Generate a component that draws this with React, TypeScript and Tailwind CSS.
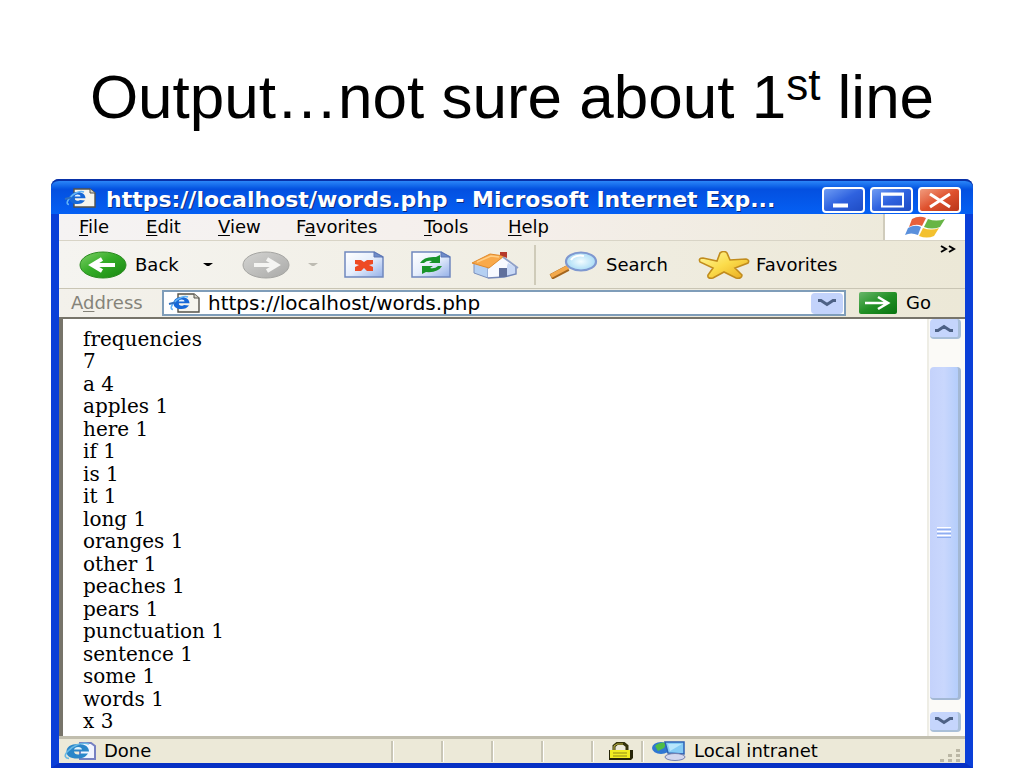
import type { ReactNode } from "react";

const words = [
  "frequencies", "7", "a 4", "apples 1", "here 1", "if 1", "is 1", "it 1", "long 1",
  "oranges 1", "other 1", "peaches 1", "pears 1", "punctuation 1", "sentence 1",
  "some 1", "words 1", "x 3",
];

function PageIcon({ className }: { className: string }) {
  return (
    <svg viewBox="0 0 32 20" preserveAspectRatio="none" className={className} aria-hidden="true">
      <path d="M10 1h16l5 4v14H10z" fill="#f6f5ee" stroke="#55534a" strokeWidth="1.4" />
      <path d="M26 1v4h5" fill="#d6d4c8" stroke="#55534a" />
      <path d="M21 12.500c-2 2.500-4 3.500-7.500 3.500-5 0-8-2-8-5.800S9 4 13.500 4s8 2.400 8 6.300H10.500c.2 1.700 1.300 2.400 3 2.400 1.300 0 2-.2 2.500-.7z" fill="#1668d8" />
      <path d="M10.700 8.500h5.800c-.2-1.200-1.200-1.900-2.800-1.900s-2.700.7-3 1.900z" fill="#e8f3ff" />
      <path d="M20 4c-4-1.500-10 1-14 5.500C3 13 2 16 5 16.500" fill="none" stroke="#63b4f6" strokeWidth="1.600" />
      <path d="M1 11l6-1.500" stroke="#2f6fc0" strokeWidth="2" />
    </svg>
  );
}

function StatusIcon() {
  return (
    <svg viewBox="0 0 32 18" preserveAspectRatio="none" className="h-[18px] w-8 shrink-0" aria-hidden="true">
      <path d="M16 1h11l4 3v13H16z" fill="#f2f5ff" stroke="#7681c2" strokeWidth="2" />
      <path d="M24 11.500c-2 3-5 5-10.500 5C6 16.500 2.500 14 2.500 9.500S6.500 2 14 2s11 3 11 7.500H10c.3 2 1.500 3 4 3 1.500 0 2.500-.3 3-1z" fill="#2a86c9" />
      <path d="M10 7.500h8c-.2-1.500-1.500-2.500-3.800-2.500-2.400 0-3.800 1-4.200 2.500z" fill="#dff2fc" />
      <path d="M25 2C18-.5 8 4 3 10c-3 4-2 6 2 6.500" fill="none" stroke="#67b8e4" strokeWidth="1.600" />
    </svg>
  );
}

function RoundArrow({ forward = false }: { forward?: boolean }) {
  return (
    <svg viewBox="0 0 48 28" className="h-7 w-12 shrink-0" aria-hidden="true">
      <defs>
        <linearGradient id="greenDisc" x1="0" y1="0" x2="1" y2="1">
          <stop offset="0" stopColor="#7fd069" />
          <stop offset=".45" stopColor="#35ad28" />
          <stop offset="1" stopColor="#18860f" />
        </linearGradient>
        <linearGradient id="greyDisc" x1="0" y1="0" x2="1" y2="1">
          <stop offset="0" stopColor="#d4d4d2" />
          <stop offset="1" stopColor="#a9a9a7" />
        </linearGradient>
      </defs>
      <ellipse cx="24" cy="14" rx="23" ry="13" fill={forward ? "url(#greyDisc)" : "url(#greenDisc)"} stroke={forward ? "#a5a5a2" : "#2b8b20"} />
      <path
        d={forward ? "M12 14h22M25 8l10 6-10 6" : "M36 14H14M23 8l-10 6 10 6"}
        fill="none"
        stroke={forward ? "#f4f4f2" : "#fff"}
        strokeWidth="4"
      />
    </svg>
  );
}

function Sheet({ children }: { children: ReactNode }) {
  return (
    <svg viewBox="0 0 40 27" className="h-[27px] w-10" aria-hidden="true">
      <defs>
        <linearGradient id="sheet" x1="0" y1="0" x2="1" y2="1">
          <stop offset="0" stopColor="#fff" />
          <stop offset=".5" stopColor="#e6eefc" />
          <stop offset="1" stopColor="#94b0e8" />
        </linearGradient>
      </defs>
      <path d="M1 1h29l9 5v20H1z" fill="url(#sheet)" stroke="#7088bf" strokeWidth="1.500" />
      <path d="M30 1v5h9z" fill="#6f8cca" stroke="#5d76b4" />
      {children}
    </svg>
  );
}

function Caret({ className }: { className: string }) {
  return (
    <svg viewBox="0 0 10 4" className={className} aria-hidden="true">
      <path d="M0 0h10L6 3H4z" fill="currentColor" />
    </svg>
  );
}

function Chevron({ up = false }: { up?: boolean }) {
  return (
    <svg viewBox="0 0 20 8" className="h-2 w-5" aria-hidden="true">
      <path d={up ? "M1 6.500h3l6-4 6 4h3" : "M1 1.500h3l6 4 6-4h3"} fill="none" stroke="#4d6185" strokeWidth="3" />
    </svg>
  );
}

function House() {
  return (
    <svg viewBox="0 0 48 28" className="h-7 w-12" aria-hidden="true">
      <path d="M3 12l14 4v11L3 22z" fill="#b5d0f2" stroke="#7c90bd" />
      <path d="M17 18L32 7l13 9v7l-12 3-16 1z" fill="#f8faff" />
      <path d="M37 12l8 4v7l-9 3V15z" fill="#c9d9f6" />
      <path d="M17 27l16-1 12-3v-7" fill="none" stroke="#7286b8" strokeWidth="1.400" />
      <path d="M28 17h8v9h-8z" fill="#60709c" />
      <path d="M1 12L19 3l14 2-15 12-7-2z" fill="#f9a94a" stroke="#e08a2c" />
      <path d="M6 11l14-6 8 1" fill="none" stroke="#ffcf86" strokeWidth="1.500" />
      <path d="M32 6l15 11" stroke="#8fa0c8" strokeWidth="1.800" />
      <path d="M29 1h7v6l-7-3z" fill="#b53a2c" />
    </svg>
  );
}

function Magnifier() {
  return (
    <svg viewBox="0 0 50 28" className="h-7 w-[50px] shrink-0" aria-hidden="true">
      <defs>
        <radialGradient id="lens">
          <stop offset="0" stopColor="#f3fcff" />
          <stop offset="1" stopColor="#a9dcf6" />
        </radialGradient>
      </defs>
      <path d="M20 17L3 26" stroke="#a5651c" strokeWidth="6" />
      <path d="M20 16L3 25" stroke="#f3a94c" strokeWidth="4" />
      <ellipse cx="33" cy="10.500" rx="15" ry="9" fill="url(#lens)" stroke="#7f98d0" strokeWidth="2.200" />
      <path d="M23 9c2-4 8-5 13-4" fill="none" stroke="#fff" strokeWidth="2" />
    </svg>
  );
}

function Star() {
  return (
    <svg viewBox="0 0 52 28" className="h-7 w-[52px] shrink-0" aria-hidden="true">
      <defs>
        <linearGradient id="star" x1="0" y1="0" x2="1" y2="1">
          <stop offset="0" stopColor="#fff7a0" />
          <stop offset=".5" stopColor="#fbdc4b" />
          <stop offset="1" stopColor="#e9a91d" />
        </linearGradient>
      </defs>
      <path d="M22 2q4-3 7 0l3 7 16-1q4 1 2 4l-13 5 7 7q0 4-6 3l-12-6-11 6q-6 1-5-3l5-7L2 11q-2-4 3-4l14 3z" fill="url(#star)" stroke="#c18c1e" strokeWidth="1.600" />
    </svg>
  );
}

function WindowsFlag() {
  return (
    <svg viewBox="0 0 42 22" className="h-[22px] w-[42px]" aria-hidden="true">
      <path d="M8 3q7-4 14-1l-4 8q-6-3-13 1z" fill="#e8603a" />
      <path d="M24 3q8 3 17 0l-5 8q-8 3-16 0z" fill="#67b545" />
      <path d="M4 12q7-4 13-1l-3 8q-7-3-13 0z" fill="#5a90dc" />
      <path d="M19 12q8 3 16 0l-5 8q-7 3-15 0z" fill="#f3c12f" />
    </svg>
  );
}

function Menu({ letter, before = "", after, width }: { letter: string; before?: string; after: string; width: string }) {
  return (
    <button type="button" className={`shrink-0 text-left ${width}`}>
      {before}
      <span className="underline underline-offset-2">{letter}</span>
      {after}
    </button>
  );
}

const captionButton =
  "flex h-[26px] w-[43px] items-center justify-center rounded-[4px] border-2 border-white";

function TitleBar() {
  return (
    <header className="flex h-[35px] items-center rounded-t-lg border-t-2 border-[#0831a8] bg-linear-to-b from-[#2b86f8] via-[#0450e0] via-25% to-[#0560f4] pr-3 pl-[13px]">
      <PageIcon className="h-5 w-8 shrink-0" />
      <h2 className="min-w-0 flex-1 truncate pt-1 pl-[10px] text-[22px] leading-7 font-bold text-white [text-shadow:1px_1px_0_#0a2a80]">
        https://localhost/words.php - Microsoft Internet Exp...
      </h2>
      <div className="flex gap-[5px] pt-1">
        <button type="button" aria-label="Minimize" className={`${captionButton} bg-linear-to-br from-[#6f9bf3] via-[#2f62df] to-[#1f4cc4]`}>
          <svg viewBox="0 0 36 20" className="h-5 w-9"><path d="M7 13.500h15v4H7z" fill="#fff" /></svg>
        </button>
        <button type="button" aria-label="Maximize" className={`${captionButton} bg-linear-to-br from-[#6f9bf3] via-[#2f62df] to-[#1f4cc4]`}>
          <svg viewBox="0 0 36 20" className="h-5 w-9"><path d="M8 4.500h21v12H8z" fill="none" stroke="#fff" strokeWidth="2" /><path d="M7 4h23" stroke="#fff" strokeWidth="3" /></svg>
        </button>
        <button type="button" aria-label="Close" className={`${captionButton} bg-linear-to-br from-[#f09a7c] via-[#df512d] to-[#b9361a]`}>
          <svg viewBox="0 0 36 20" className="h-5 w-9"><path d="M8 4l20 13M28 4L8 17" stroke="#fff" strokeWidth="3" /></svg>
        </button>
      </div>
    </header>
  );
}

function MenuBar() {
  return (
    <nav className="flex h-[27px] items-stretch border-b border-[#d8d4c6] bg-linear-to-r from-[#f5f3f3] via-[#f5efeb] to-[#ece9d8]">
      <div className="flex min-w-0 flex-1 items-center border-r-2 border-[#d0ccbc] pl-5">
        <Menu letter="F" after="ile" width="w-[67px]" />
        <Menu letter="E" after="dit" width="w-[72px]" />
        <Menu letter="V" after="iew" width="w-[78px]" />
        <Menu before="F" letter="a" after="vorites" width="w-[128px]" />
        <Menu letter="T" after="ools" width="w-[84px]" />
        <Menu letter="H" after="elp" width="w-[60px]" />
      </div>
      <div className="flex w-20 items-center justify-center bg-white"><WindowsFlag /></div>
    </nav>
  );
}

function ToolBar() {
  return (
    <div className="flex h-[47px] items-center bg-linear-to-r from-[#f5f4f0] to-[#ece8d7] pl-5">
      <button type="button" className="flex w-[124px] items-center gap-2"><RoundArrow />Back</button>
      <button type="button" aria-label="Back history" className="w-[39px]"><Caret className="h-1 w-[10px]" /></button>
      <button type="button" aria-label="Forward"><RoundArrow forward /></button>
      <button type="button" aria-label="Forward history" className="w-[54px] pl-[18px] text-[#bdbbb2]"><Caret className="h-1 w-[10px]" /></button>
      <button type="button" aria-label="Stop" className="w-[67px]">
        <Sheet>
          <path d="M11 9h6l3 2 3-2h6v4l-4 1 4 2v4h-6l-3-3-3 3h-6v-4l4-2-4-1z" fill="#ee4a24" />
        </Sheet>
      </button>
      <button type="button" aria-label="Refresh" className="w-[60px]">
        <Sheet>
          <path d="M9 12q4-7 16-6l4-2v8H18l3-2q-5-1-8 2z" fill="#18942a" />
          <path d="M31 15q-4 7-16 6l-4 2v-8h11l-3 2q5 1 8-2z" fill="#18942a" />
        </Sheet>
      </button>
      <button type="button" aria-label="Home" className="w-[63px]"><House /></button>
      <div className="h-10 w-[14px] border-l-2 border-[#cfcbb9]" />
      <button type="button" className="flex w-[150px] items-center gap-2"><Magnifier />Search</button>
      <button type="button" className="flex items-center gap-[6px]"><Star />Favorites</button>
      <button type="button" aria-label="More buttons" className="ml-auto self-start pt-1 pr-[9px]">
        <svg viewBox="0 0 16 8" className="h-2 w-4"><path d="M1 1l5 3-5 3M9 1l5 3-5 3" fill="none" stroke="#000" strokeWidth="2" /></svg>
      </button>
    </div>
  );
}

function AddressBar() {
  return (
    <form className="flex h-[29px] items-center border-t border-[#c9c5b4] bg-linear-to-r from-[#f3f1eb] to-[#ece8d7] pl-3" onSubmit={(e) => e.preventDefault()}>
      <label htmlFor="address" className="w-[91px] text-[#858379]">A<span className="underline underline-offset-2">d</span>dress</label>
      <div className="flex h-[26px] min-w-0 flex-1 items-center border-2 border-[#7f9db9] bg-white pl-1">
        <PageIcon className="h-5 w-8 shrink-0" />
        <input id="address" defaultValue="https://localhost/words.php" className="h-[22px] min-w-0 flex-1 bg-transparent pl-2 text-[20px] outline-none" />
        <button type="button" aria-label="Show addresses" className="mr-px flex h-[21px] w-8 items-center justify-center rounded-sm bg-[#c3d3fb]"><Chevron /></button>
      </div>
      <button type="submit" className="ml-[13px] flex w-[106px] items-center gap-[9px]">
        <svg viewBox="0 0 38 22" className="h-[22px] w-[38px]" aria-hidden="true">
          <defs>
            <linearGradient id="go" x1="0" y1="0" x2="1" y2="1"><stop offset="0" stopColor="#69b66a" /><stop offset=".5" stopColor="#229025" /><stop offset="1" stopColor="#087410" /></linearGradient>
          </defs>
          <rect width="38" height="22" rx="2" fill="url(#go)" />
          <path d="M6 11h22M19 5l10 6-10 6" fill="none" stroke="#fff" strokeWidth="2.600" />
        </svg>
        Go
      </button>
    </form>
  );
}

function ScrollBar() {
  return (
    <div className="flex w-[38px] shrink-0 flex-col border-l-2 border-[#eeede5] bg-[#fbfaf7] pr-1 pl-px">
      <button type="button" aria-label="Scroll up" className="flex h-5 items-center justify-center rounded-sm border-r-3 border-b-2 border-[#a9bfd8] bg-[#c5d5fc]"><Chevron up /></button>
      <div className="mt-7 flex flex-1 flex-col items-center justify-center gap-px rounded-sm border-r-3 border-b-2 border-[#a3b8d4] bg-linear-to-r from-[#c4d2fb] via-[#c9d7fd] to-[#b4cdfb]">
        <span className="h-px w-[14px] bg-white" />
        <span className="h-px w-[14px] bg-[#8faef0]" />
        <span className="h-px w-[14px] bg-white" />
        <span className="h-px w-[14px] bg-[#8faef0]" />
        <span className="h-px w-[14px] bg-white" />
        <span className="h-px w-[14px] bg-[#8faef0]" />
      </div>
      <button type="button" aria-label="Scroll down" className="mt-3 mb-1 flex h-5 items-center justify-center rounded-sm border-r-3 border-b-2 border-[#a9bfd8] bg-[#c5d5fc]"><Chevron /></button>
    </div>
  );
}

const statusCell = "flex h-[21px] items-center border-l-2 border-[#c9c6b5] shadow-[inset_1px_0_0_#fff]";

function StatusBar() {
  return (
    <footer className="flex h-[27px] items-center border-t-3 border-[#c1beae] bg-[#ece9d8] pl-[5px]">
      <StatusIcon />
      <span className="min-w-0 flex-1 pl-2">Done</span>
      {[0, 1, 2, 3].map((cell) => (
        <span key={cell} className={`${statusCell} w-[50px]`} />
      ))}
      <span className={`${statusCell} w-[50px] justify-center pl-2`}>
        <svg viewBox="0 0 26 18" className="h-[18px] w-[26px]" aria-label="Secure">
          <path d="M6 9V4l3-2.500h7L19 4v5" fill="none" stroke="#35330a" strokeWidth="3" />
          <path d="M6 8V4l3-2h6" fill="none" stroke="#c5bd49" />
          <path d="M1 8h24v8l-2 2H1z" fill="#252407" />
          <path d="M2 8h20v8H2z" fill="#f2ee22" />
          <path d="M5 11h14M5 14h14" stroke="#938d16" />
        </svg>
      </span>
      <span className={`${statusCell} w-[324px] gap-2 pl-[9px]`}>
        <svg viewBox="0 0 34 20" className="h-5 w-[34px]" aria-hidden="true">
          <ellipse cx="9" cy="7" rx="9" ry="6" fill="#2f77d2" />
          <path d="M3 5q5-5 12-3l-3 5-6 3z" fill="#4fbd45" />
          <path d="M13 1h19v12l-16-1z" fill="#85ccf5" stroke="#2c62b5" strokeWidth="1.500" />
          <path d="M16 3h14l-12 7z" fill="#b8e6fc" />
          <ellipse cx="23" cy="16" rx="10" ry="3.500" fill="#d2d7ee" stroke="#7480ae" />
        </svg>
        Local intranet
        <svg viewBox="0 0 22 14" className="mr-1 ml-auto h-[14px] w-[22px] self-end" aria-hidden="true">
          <path d="M17 1h4v3h-4zM9 6h4v3H9zM17 6h4v3h-4zM1 11h4v3H1zM9 11h4v3H9zM17 11h4v3h-4z" fill="#bbb7a5" />
        </svg>
      </span>
    </footer>
  );
}

export default function App() {
  return (
    <main className="flex min-h-screen flex-col bg-white font-['Liberation_Sans',Arial,sans-serif] text-black">
      <h1 className="flex h-[179px] items-center justify-center px-4 pt-3 text-[62px] leading-none whitespace-nowrap">
        <span>
          Output…not sure about 1<sup className="static align-[18px] text-[44px] leading-none">st</sup> line
        </span>
      </h1>
      <section className="mx-[51px] flex flex-1 flex-col rounded-t-lg bg-[#0831a8] font-['DejaVu_Sans',Verdana,sans-serif] text-[18px] leading-5">
        <TitleBar />
        <div className="flex flex-1 flex-col border-x-8 border-b-5 border-[#0a3fd8] border-b-[#0630c4]">
          <MenuBar />
          <ToolBar />
          <AddressBar />
          <div className="flex flex-1 border-t-2 border-l-4 border-[#77746a] bg-white">
            <ul className="flex flex-1 flex-col justify-between pt-[9px] pb-1 pl-5 font-['DejaVu_Serif',serif] text-[20px] leading-[22px]">
              {words.map((word) => <li key={word}>{word}</li>)}
            </ul>
            <ScrollBar />
          </div>
          <StatusBar />
        </div>
      </section>
    </main>
  );
}
